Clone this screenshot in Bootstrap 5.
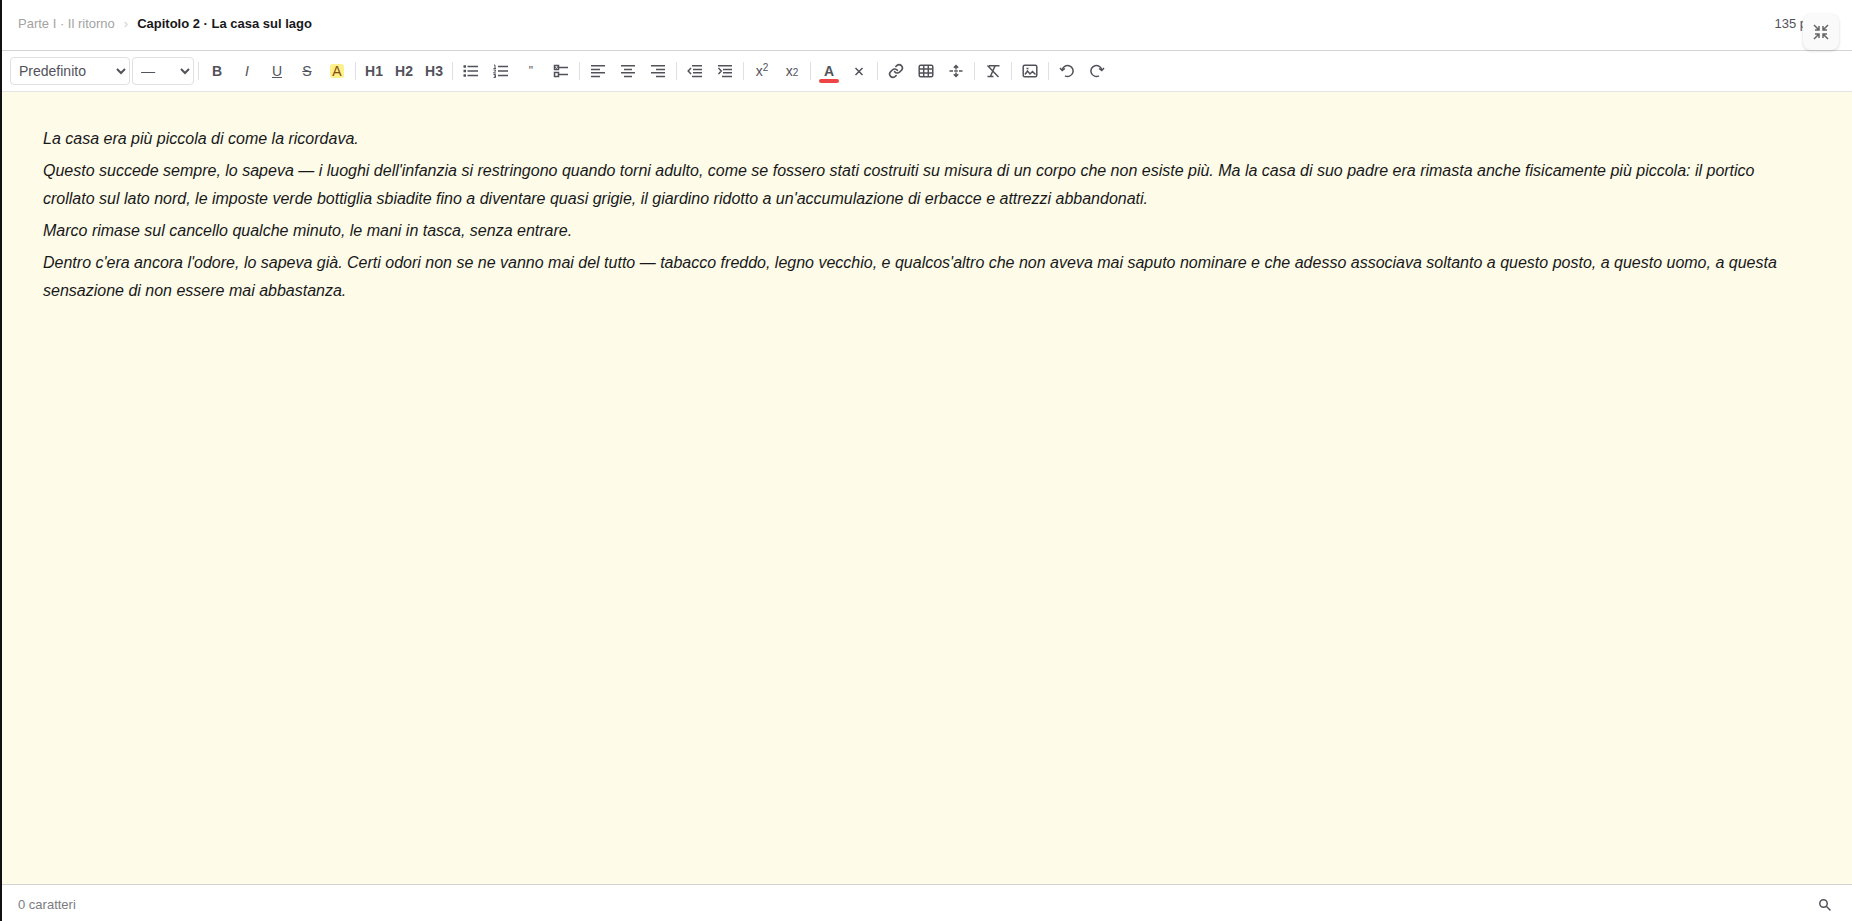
<!DOCTYPE html>
<html lang="it">
<head>
<meta charset="utf-8">
<meta name="viewport" content="width=device-width, initial-scale=1">
<title>La casa sul lago</title>
<link href="https://cdn.jsdelivr.net/npm/bootstrap@5.3.0/dist/css/bootstrap.min.css" rel="stylesheet">
<style>
  body { font-family: "Liberation Sans", Arial, sans-serif; font-size: 14px; color: #18181b; }
  .app-shell { border-left: 2px solid #111113; }
  .top-line { height: 51px; padding-bottom: 2px; border-bottom: 1px solid #d4d4d4; font-size: 13px; }
  .crumbs { gap: 9px; }
  .crumb-part { color: #a3a3a3; }
  .crumb-part:hover { color: #52525b; }
  .crumb-sep { color: #d0d0d0; }
  .word-total { color: #52525b; }
  .exit-full { top: 14px; right: 13px; width: 36px; height: 36px; border: 0; border-radius: 8px;
    background: #fafafa; color: #666; box-shadow: 0 1px 3px rgba(0,0,0,.16); z-index: 5; }
  .tools { min-height: 41px; gap: 2px; padding: 0 8px; border-bottom: 1px solid #e5e5e5; }
  .tools select { height: 28px; border: 1px solid #e0e0e3; border-radius: 4px; background: #fff;
    color: #52525b; font-size: 14px; padding: 0 4px; }
  .pick-font { width: 120px; }
  .pick-size { width: 62px; }
  .tool { width: 28px; height: 28px; border: 0; border-radius: 4px; background: transparent;
    color: #52525b; font-size: 14px; line-height: 20px; }
  .tool:hover { background: #f4f4f5; }
  .tool sup, .tool sub { font-size: 10px; line-height: 0; }
  .tool sub { bottom: 0; }
  .rule-v { width: 1px; height: 18px; margin: 0 2px; background: #e0e0e3; }
  .hl { background: #fef08a; color: #854d0e; border-radius: 3px; padding: 0 2px; line-height: 14px; }
  .ink-tool { padding-bottom: 2px; line-height: 16px; }
  .ink { width: 20px; height: 4px; border-radius: 2px; background: #ef4444; }
  .quote-glyph { font-size: 12px; }
  svg { fill: none; stroke: currentColor; stroke-width: 1.5; display: block; }
  .sheet { background: #fefce8; padding: 33px 48px 32px 41px; font-size: 16px; line-height: 28px; font-style: italic; outline: 0; }
  .sheet p { margin: 0 0 4px; }
  .bottom-line { height: 37px; padding-top: 4px; border-top: 1px solid #d4d4d4; font-size: 13px; color: #7c7c80; }
  .find { border: 0; background: transparent; color: #52525b; width: 22px; height: 24px; }
</style>
</head>
<body>
<div class="app-shell d-flex flex-column min-vh-100 position-relative bg-white">
  <header class="top-line d-flex align-items-center justify-content-between px-3">
    <nav class="crumbs d-flex align-items-center" aria-label="Percorso">
      <a class="crumb-part text-decoration-none" href="#parte">Parte I · Il ritorno</a>
      <span class="crumb-sep">›</span>
      <strong>Capitolo 2 · La casa sul lago</strong>
    </nav>
    <span class="word-total">135 parole</span>
  </header>
  <button class="exit-full position-absolute d-flex align-items-center justify-content-center p-0" type="button" aria-label="Esci da schermo intero">
    <svg width="16" height="16" viewBox="0 0 16 16"><path d="M1 1l5 5M6 2v4H2M15 1l-5 5M10 2v4h4M1 15l5-5M2 10h4v4M15 15l-5-5M14 10h-4v4"/></svg>
  </button>

  <div class="tools d-flex align-items-center flex-wrap" role="toolbar" aria-label="Formattazione">
    <select class="pick-font" aria-label="Carattere"><option>Predefinito</option></select>
    <select class="pick-size" aria-label="Dimensione"><option>—</option></select>
    <span class="rule-v"></span>
    <button class="tool p-0 fw-bold" type="button">B</button>
    <button class="tool p-0 fst-italic" type="button">I</button>
    <button class="tool p-0 text-decoration-underline" type="button">U</button>
    <button class="tool p-0 text-decoration-line-through" type="button">S</button>
    <button class="tool p-0" type="button"><span class="hl d-inline-block">A</span></button>
    <span class="rule-v"></span>
    <button class="tool p-0 fw-bold" type="button">H1</button>
    <button class="tool p-0 fw-bold" type="button">H2</button>
    <button class="tool p-0 fw-bold" type="button">H3</button>
    <span class="rule-v"></span>
    <button class="tool p-0" type="button" aria-label="Elenco puntato"><svg class="mx-auto" width="16" height="16" viewBox="0 0 16 16"><path d="M4.500 3.500H15M4.500 8H15M4.500 12.500H15"/><path d="M.5 3.500h2.500M.5 8h2.500M.5 12.500h2.500" stroke-width="2.500"/></svg></button>
    <button class="tool p-0" type="button" aria-label="Elenco numerato"><svg class="mx-auto" width="16" height="16" viewBox="0 0 16 16"><path d="M5 3.500h10M5 8h10M5 12.500h10"/><path d="M1 2h1v3M.5 5.500h2.500M.5 7h2v1l-2 2h2.500M.5 11.500h2v3h-2M1 13h1.500" stroke-width="1"/></svg></button>
    <button class="tool p-0 quote-glyph" type="button" aria-label="Citazione">"</button>
    <button class="tool p-0" type="button" aria-label="Elenco attività"><svg class="mx-auto" width="16" height="16" viewBox="0 0 16 16"><path d="M1.500 2.500h4v4h-4zM1.500 9.500h4v4h-4zM6 4.500h9M6 11.500h9"/><path d="M2 4l1.500 1.500L5.500 3" stroke-width="1"/></svg></button>
    <span class="rule-v"></span>
    <button class="tool p-0" type="button" aria-label="Allinea a sinistra"><svg class="mx-auto" width="16" height="16" viewBox="0 0 16 16"><path d="M1 2.700h14M1 6.500h9M1 9.700h14M1 13.500h9"/></svg></button>
    <button class="tool p-0" type="button" aria-label="Centra"><svg class="mx-auto" width="16" height="16" viewBox="0 0 16 16"><path d="M1 2.700h14M4 6.500h8M1 9.700h14M4 13.500h8"/></svg></button>
    <button class="tool p-0" type="button" aria-label="Allinea a destra"><svg class="mx-auto" width="16" height="16" viewBox="0 0 16 16"><path d="M1 2.700h14M6 6.500h9M1 9.700h14M6 13.500h9"/></svg></button>
    <span class="rule-v"></span>
    <button class="tool p-0" type="button" aria-label="Riduci rientro"><svg class="mx-auto" width="16" height="16" viewBox="0 0 16 16"><path d="M5 2.700h10M6 6.500h9M6 9.700h9M5 13.500h10M4 5L1.200 8 4 11"/></svg></button>
    <button class="tool p-0" type="button" aria-label="Aumenta rientro"><svg class="mx-auto" width="16" height="16" viewBox="0 0 16 16"><path d="M1 2.700h14M6 6.500h9M6 9.700h9M5 13.500h10M1.500 5L4.300 8l-2.800 3"/></svg></button>
    <span class="rule-v"></span>
    <button class="tool p-0" type="button">x<sup>2</sup></button>
    <button class="tool p-0" type="button">x<sub>2</sub></button>
    <span class="rule-v"></span>
    <button class="tool ink-tool px-0 pt-0 fw-bold d-flex flex-column align-items-center justify-content-end" type="button"><span>A</span><span class="ink"></span></button>
    <button class="tool p-0" type="button" aria-label="Rimuovi colore"><svg class="mx-auto" width="16" height="16" viewBox="0 0 16 16"><path d="M4.500 5l7 7M11.500 5l-7 7"/></svg></button>
    <span class="rule-v"></span>
    <button class="tool p-0" type="button" aria-label="Collegamento"><svg class="mx-auto" width="16" height="16" viewBox="0 0 24 24" stroke-linecap="round"><path stroke-width="2.500" d="M10 13a5 5 0 0 0 7.500.5l3-3a5 5 0 0 0-7-7l-1.700 1.700M14 11a5 5 0 0 0-7.500-.5l-3 3a5 5 0 0 0 7 7l1.700-1.700"/></svg></button>
    <button class="tool p-0" type="button" aria-label="Tabella"><svg class="mx-auto" width="16" height="16" viewBox="0 0 16 16"><rect x="1.200" y="2.200" width="13.600" height="11.600" rx="1.500"/><path d="M1 6h14M1 10h14M5.700 2v12M10.300 2v12"/></svg></button>
    <button class="tool p-0" type="button" aria-label="Interruzione"><svg class="mx-auto" width="16" height="16" viewBox="0 0 16 16"><path d="M1.500 8H5M6.200 8h3.600M11 8h3.500M8 2.500V6.500M8 9.500v4M5.800 4.700L8 2.500l2.200 2.200M5.800 11.300L8 13.500l2.200-2.200"/></svg></button>
    <span class="rule-v"></span>
    <button class="tool p-0" type="button" aria-label="Cancella formattazione"><svg class="mx-auto" width="16" height="16" viewBox="0 0 16 16"><path d="M4 2.700h10.500M10 3L5.500 13.300M2.500 13.500h6M2.500 2.500l11 11.500"/></svg></button>
    <span class="rule-v"></span>
    <button class="tool p-0" type="button" aria-label="Immagine"><svg class="mx-auto" width="16" height="16" viewBox="0 0 16 16"><rect x="1.200" y="2.200" width="13.600" height="11.600" rx="1.500"/><path d="M3 11.500L5.500 8l2.500 3 2.500-2.500 3 3M4.500 5.500h2"/></svg></button>
    <span class="rule-v"></span>
    <button class="tool p-0" type="button" aria-label="Annulla"><svg class="mx-auto" width="16" height="16" viewBox="0 0 16 16"><path d="M1 5l2.200 2.500L6 5.500M3.200 7A5.500 5.500 0 1 1 6 12.800"/></svg></button>
    <button class="tool p-0" type="button" aria-label="Ripeti"><svg class="mx-auto" width="16" height="16" viewBox="0 0 16 16"><path d="M15 5l-2.200 2.500L10 5.500M12.800 7A5.500 5.500 0 1 0 10 12.800"/></svg></button>
  </div>

  <main class="sheet flex-grow-1" contenteditable="true" spellcheck="false">
    <p>La casa era più piccola di come la ricordava.</p>
    <p>Questo succede sempre, lo sapeva — i luoghi dell'infanzia si restringono quando torni adulto, come se fossero stati costruiti su misura di un corpo che non esiste più. Ma la casa di suo padre era rimasta anche fisicamente più piccola: il portico crollato sul lato nord, le imposte verde bottiglia sbiadite fino a diventare quasi grigie, il giardino ridotto a un'accumulazione di erbacce e attrezzi abbandonati.</p>
    <p>Marco rimase sul cancello qualche minuto, le mani in tasca, senza entrare.</p>
    <p>Dentro c'era ancora l'odore, lo sapeva già. Certi odori non se ne vanno mai del tutto — tabacco freddo, legno vecchio, e qualcos'altro che non aveva mai saputo nominare e che adesso associava soltanto a questo posto, a questo uomo, a questa sensazione di non essere mai abbastanza.</p>
  </main>

  <footer class="bottom-line d-flex align-items-center justify-content-between px-3">
    <span>0 caratteri</span>
    <button class="find p-0" type="button" aria-label="Cerca"><svg class="mx-auto" width="14" height="14" viewBox="0 0 14 14"><circle cx="5.500" cy="5.500" r="3.700"/><path d="M8.300 8.300l4.200 4.200"/></svg></button>
  </footer>
</div>
<script src="https://cdn.jsdelivr.net/npm/bootstrap@5.3.0/dist/js/bootstrap.bundle.min.js"></script>
</body>
</html>
